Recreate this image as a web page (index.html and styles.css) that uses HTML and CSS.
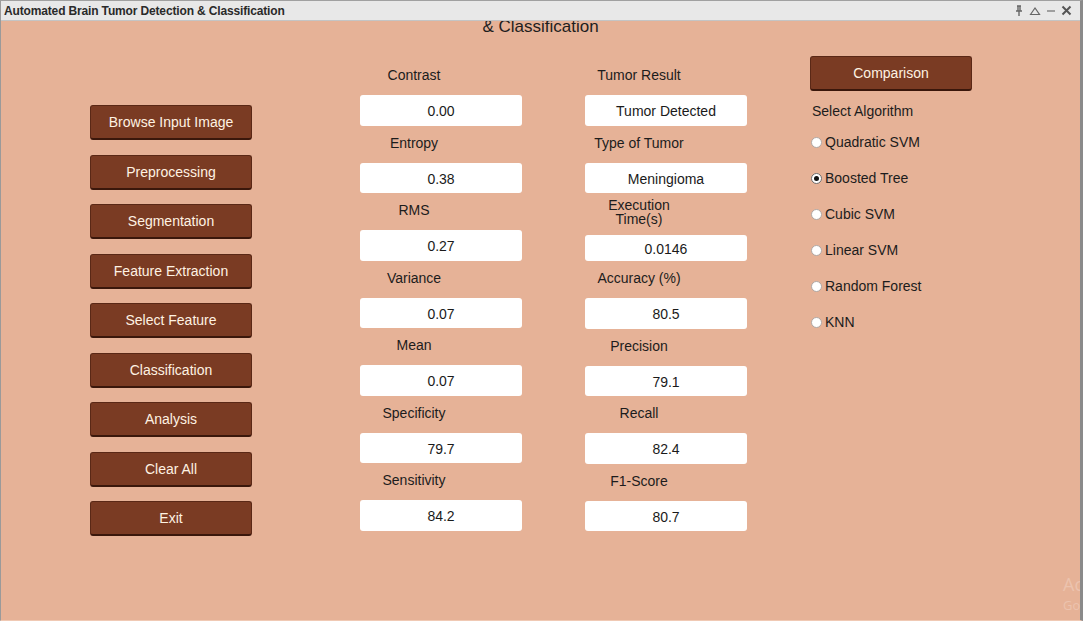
FILE: index.html
```html
<!DOCTYPE html>
<html>
<head>
<meta charset="utf-8">
<link rel="stylesheet" href="styles.css">
</head>
<body>
<div class="window">
  <div class="titlebar">
    <span class="title">Automated Brain Tumor Detection &amp; Classification</span>
    <div class="controls">
      <svg width="10" height="12" viewBox="0 0 10 12"><path d="M3 1h4M4 1v5M6 1v5M2 6h6M5 6v5" stroke="#666" stroke-width="1.4" fill="none"/></svg>
      <svg width="12" height="10" viewBox="0 0 12 10"><path d="M1.5 8.5L6 2l4.5 6.5z" stroke="#666" stroke-width="1.2" fill="none"/></svg>
      <svg width="10" height="10" viewBox="0 0 10 10"><path d="M1 5h8" stroke="#777" stroke-width="1.3"/></svg>
      <svg width="11" height="11" viewBox="0 0 11 11"><path d="M1.5 1.5l8 8M9.5 1.5l-8 8" stroke="#555" stroke-width="2"/></svg>
    </div>
  </div>
  <div class="content">
    <h1 class="heading">&amp; Classification</h1>
    <div class="columns">
      <div class="col col-buttons">
        <div class="btn">Browse Input Image</div>
        <div class="btn">Preprocessing</div>
        <div class="btn">Segmentation</div>
        <div class="btn">Feature Extraction</div>
        <div class="btn">Select Feature</div>
        <div class="btn">Classification</div>
        <div class="btn">Analysis</div>
        <div class="btn">Clear All</div>
        <div class="btn">Exit</div>
      </div>
      <div class="col col-fields col-a">
        <div class="label">Contrast</div><div class="box">0.00</div>
        <div class="label">Entropy</div><div class="box">0.38</div>
        <div class="label">RMS</div><div class="box">0.27</div>
        <div class="label">Variance</div><div class="box">0.07</div>
        <div class="label">Mean</div><div class="box">0.07</div>
        <div class="label">Specificity</div><div class="box">79.7</div>
        <div class="label">Sensitivity</div><div class="box">84.2</div>
      </div>
      <div class="col col-fields col-b">
        <div class="label">Tumor Result</div><div class="box">Tumor Detected</div>
        <div class="label">Type of Tumor</div><div class="box">Meningioma</div>
        <div class="label label-two">Execution<br>Time(s)</div><div class="box box-short">0.0146</div>
        <div class="label">Accuracy (%)</div><div class="box">80.5</div>
        <div class="label">Precision</div><div class="box">79.1</div>
        <div class="label">Recall</div><div class="box">82.4</div>
        <div class="label">F1-Score</div><div class="box">80.7</div>
      </div>
      <div class="col col-algo">
        <div class="btn">Comparison</div>
        <div class="algo-title">Select Algorithm</div>
        <div class="radio"><span class="dot"></span>Quadratic SVM</div>
        <div class="radio"><span class="dot on"></span>Boosted Tree</div>
        <div class="radio"><span class="dot"></span>Cubic SVM</div>
        <div class="radio"><span class="dot"></span>Linear SVM</div>
        <div class="radio"><span class="dot"></span>Random Forest</div>
        <div class="radio"><span class="dot"></span>KNN</div>
      </div>
    </div>
    <div class="watermark"><div class="wm1">Activate Windows</div><div class="wm2">Go to Settings to activate Windows.</div></div>
  </div>
</div>
</body>
</html>
```
FILE: styles.css
```css
* { box-sizing: border-box; }
html, body { margin: 0; padding: 0; }
body {
  width: 1083px;
  height: 622px;
  overflow: hidden;
  background: #ffffff;
  font-family: "Liberation Sans", Arial, sans-serif;
}
.window {
  width: 1083px;
  height: 621px;
  border-left: 1px solid #9a9a9a;
  border-right: 3px solid #8a8a8a;
  border-top: 1px solid #a0a0a0;
  border-bottom: 1px solid #f0c9b4;
  display: flex;
  flex-direction: column;
}
.titlebar {
  height: 20px;
  background: #e8e8e8;
  border-bottom: 1px solid #c4c4c4;
  display: flex;
  align-items: center;
  justify-content: space-between;
  padding: 0 8px 0 3px;
  flex-shrink: 0;
}
.title {
  font-size: 12px;
  font-weight: bold;
  color: #2a2a2a;
  letter-spacing: -0.15px;
}
.controls {
  display: flex;
  align-items: center;
  gap: 5px;
}
.content {
  flex: 1;
  background: #e6b297;
  overflow: hidden;
  position: relative;
}
.heading {
  margin: -4px 0 0 0;
  height: 20px;
  line-height: 20px;
  font-size: 17px;
  font-weight: normal;
  text-align: center;
  color: #1e1e1e;
}
.columns {
  display: flex;
  align-items: flex-start;
  padding-left: 89px;
}
.col { width: 162px; display: flex; flex-direction: column; }
.col-buttons { padding-top: 68px; gap: 14.5px; }
.col-a { margin-left: 108px; padding-top: 21px; }
.col-b { margin-left: 63px; padding-top: 21px; }
.col-algo { margin-left: 63px; padding-top: 19px; }
.btn {
  height: 35px;
  background: #7a3b23;
  border: 1px solid #5a2816;
  border-bottom: 2px solid #3a170b;
  border-radius: 3px;
  color: #fff2e2;
  font-size: 14px;
  display: flex;
  align-items: center;
  justify-content: center;
}
.label {
  width: 108px;
  height: 37px;
  display: flex;
  align-items: center;
  justify-content: center;
  text-align: center;
  font-size: 14px;
  color: #1c1c1c;
  padding-bottom: 3px;
}
.label-two {
  height: 42px;
  line-height: 14px;
  padding-bottom: 4px;
}
.box {
  height: 30.5px;
  background: #ffffff;
  border-radius: 3px;
  display: flex;
  align-items: center;
  justify-content: center;
  font-size: 14px;
  color: #1a1a1a;
  padding-top: 2px;
}
.box-short { height: 26px; }
.algo-title {
  font-size: 14px;
  color: #1c1c1c;
  padding-left: 2px;
  margin-top: 10px;
  height: 20px;
  line-height: 20px;
}
.radio {
  height: 36px;
  display: flex;
  align-items: center;
  font-size: 14px;
  color: #1c1c1c;
  padding-left: 1px;
}
.algo-title + .radio { margin-top: 3px; }
.dot {
  width: 11px;
  height: 11px;
  border-radius: 50%;
  background: #ffffff;
  border: 1px solid #b0a8a4;
  margin-right: 3px;
  display: flex;
  align-items: center;
  justify-content: center;
}
.dot.on { border-color: #6e6e6e; }
.dot.on::after {
  content: "";
  width: 5px;
  height: 5px;
  border-radius: 50%;
  background: #111;
}
.watermark {
  position: absolute;
  left: 1062px;
  top: 552px;
  white-space: nowrap;
  color: #ecc3ae;
  font-family: "Open Sans", "Liberation Sans", sans-serif;
}
.wm1 { font-size: 18px; line-height: 22px; }
.wm2 { font-size: 13px; line-height: 20px; }
```
